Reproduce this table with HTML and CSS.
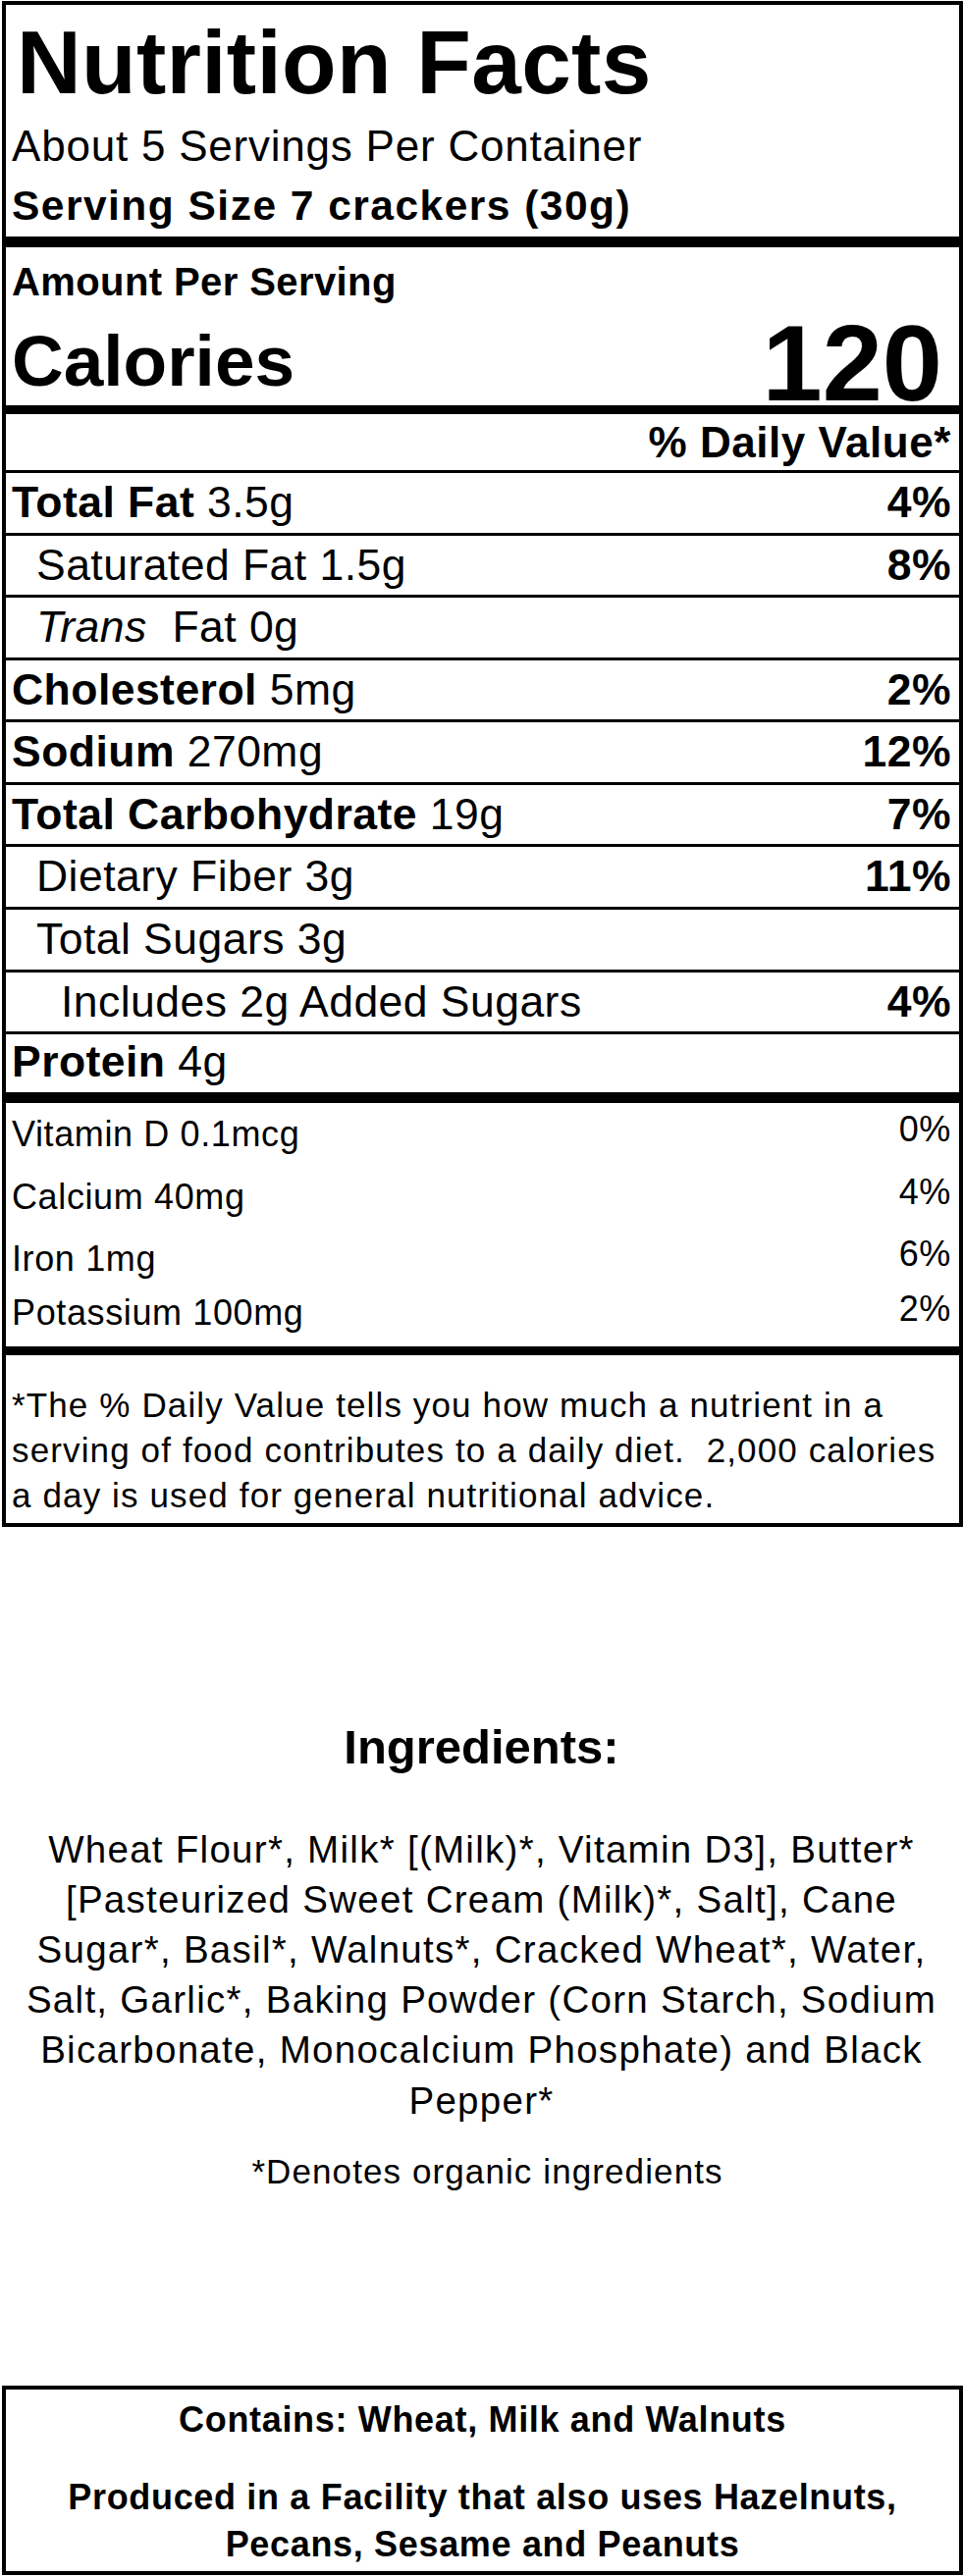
FILE: index.html
```html
<!DOCTYPE html>
<html lang="en">
<head>
<meta charset="utf-8">
<title>Nutrition Facts</title>
<link rel="stylesheet" href="styles.css">
</head>
<body>
<div class="label">
  <section class="head">
    <h1 class="title">Nutrition Facts</h1>
    <p class="servings">About 5 Servings Per Container</p>
    <p class="size">Serving Size 7 crackers (30g)</p>
  </section>
  <section class="cal">
    <p class="amount">Amount Per Serving</p>
    <div class="cal-row">
      <span class="cal-label">Calories</span>
      <span class="cal-value">120</span>
    </div>
  </section>
  <section class="nutrients">
    <div class="dv-head">% Daily Value*</div>
    <div class="row"><span><b>Total Fat</b> 3.5g</span><b>4%</b></div>
    <div class="row sub"><span>Saturated Fat 1.5g</span><b>8%</b></div>
    <div class="row sub"><span><em>Trans</em>&nbsp; Fat 0g</span></div>
    <div class="row"><span><b>Cholesterol</b> 5mg</span><b>2%</b></div>
    <div class="row"><span><b>Sodium</b> 270mg</span><b>12%</b></div>
    <div class="row"><span><b>Total Carbohydrate</b> 19g</span><b>7%</b></div>
    <div class="row sub"><span>Dietary Fiber 3g</span><b>11%</b></div>
    <div class="row sub"><span>Total Sugars 3g</span></div>
    <div class="row sub2"><span>Includes 2g Added Sugars</span><b>4%</b></div>
    <div class="row last"><span><b>Protein</b> 4g</span></div>
  </section>
  <section class="vitamins">
    <div class="vit"><span>Vitamin D 0.1mcg</span><span class="vit-pct">0%</span></div>
    <div class="vit"><span>Calcium 40mg</span><span class="vit-pct">4%</span></div>
    <div class="vit"><span>Iron 1mg</span><span class="vit-pct">6%</span></div>
    <div class="vit short"><span>Potassium 100mg</span><span class="vit-pct">2%</span></div>
  </section>
  <p class="footnote">*The % Daily Value tells you how much a nutrient in a serving of food contributes to a daily diet.&nbsp; 2,000 calories a day is used for general nutritional advice.</p>
</div>

<section class="ingredients">
  <h2 class="ing-title">Ingredients:</h2>
  <p class="ing-text">Wheat Flour*, Milk* [(Milk)*, Vitamin D3], Butter* [Pasteurized Sweet Cream (Milk)*, Salt], Cane Sugar*, Basil*, Walnuts*, Cracked Wheat*, Water, Salt, Garlic*, Baking Powder (Corn Starch, Sodium Bicarbonate, Monocalcium Phosphate) and Black Pepper*</p>
  <p class="ing-note">*Denotes organic ingredients</p>
</section>

<div class="allergens">
  <p>Contains: Wheat, Milk and Walnuts</p>
  <p>Produced in a Facility that also uses Hazelnuts, Pecans, Sesame and Peanuts</p>
</div>
</body>
</html>
```
FILE: styles.css
```css
body {
  margin: 0;
  background: #fff;
  color: #000;
  font-family: "Liberation Sans", Arial, sans-serif;
}

p, h1, h2 {
  margin: 0;
}

/* ---------- Nutrition label ---------- */
.label {
  box-sizing: border-box;
  width: 979px;
  margin: 1px 0 0 2px;
  border: 4px solid #000;
}

.head {
  padding: 9px 8px 5px 6px;
}

.title {
  padding-left: 5px;
  font-size: 91px;
  line-height: 100px;
  font-weight: 700;
  letter-spacing: 0.3px;
}

.servings {
  font-size: 44px;
  line-height: 70px;
  letter-spacing: 0.78px;
}

.size {
  font-size: 42.5px;
  line-height: 52px;
  font-weight: 700;
  letter-spacing: 1.48px;
}

.cal {
  border-top: 11px solid #000;
  padding: 0 8px 0 6px;
}

.amount {
  font-size: 40px;
  line-height: 71px;
  font-weight: 700;
  letter-spacing: 0.4px;
}

.cal-row {
  display: flex;
  justify-content: space-between;
  align-items: flex-end;
}

.cal-label {
  font-size: 73px;
  line-height: 90px;
  font-weight: 700;
}

.cal-value {
  padding-right: 9px;
  font-size: 110px;
  line-height: 86px;
  font-weight: 700;
}

.nutrients {
  border-top: 9px solid #000;
}

.dv-head {
  padding: 0 8px 0 6px;
  text-align: right;
  font-size: 44px;
  line-height: 57px;
  font-weight: 700;
  letter-spacing: 0.55px;
}

.row {
  display: flex;
  justify-content: space-between;
  border-top: 3px solid #000;
  padding: 0 8px 0 6px;
  font-size: 44.5px;
  line-height: 60.56px;
  letter-spacing: 0.46px;
}

.row b {
  font-weight: 700;
}

.row em {
  font-style: italic;
}

.row.sub {
  padding-left: 31px;
}

.row.sub2 {
  padding-left: 56px;
}

.row.last {
  line-height: 55px;
  padding-bottom: 4px;
}

.vitamins {
  border-top: 11px solid #000;
  padding: 0 8px 11.5px 6px;
}

.vit {
  display: flex;
  justify-content: space-between;
  align-items: flex-start;
  font-size: 36px;
  line-height: 63.5px;
  letter-spacing: 0.62px;
}

.vit .vit-pct {
  line-height: 54.5px;
}

.vit.short {
  line-height: 46px;
}

.vit.short .vit-pct {
  line-height: 37px;
}

.footnote {
  border-top: 9px solid #000;
  padding: 27.5px 8px 5.5px 6px;
  font-size: 35px;
  line-height: 46px;
  letter-spacing: 1.13px;
}

/* ---------- Ingredients ---------- */
.ingredients {
  padding: 194px 10px 0;
  text-align: center;
}

.ing-title {
  font-size: 49px;
  line-height: 60px;
  font-weight: 700;
}

.ing-text {
  margin-top: 48.6px;
  font-size: 38.5px;
  line-height: 51.2px;
  letter-spacing: 1.28px;
}

.ing-note {
  margin-top: 24.4px;
  padding-left: 12px;
  font-size: 35px;
  line-height: 46px;
  letter-spacing: 1.1px;
}

/* ---------- Allergen box ---------- */
.allergens {
  box-sizing: border-box;
  width: 979px;
  margin: 194.8px 0 0 2px;
  border: 4px solid #000;
  padding: 7px 6px 3px;
  text-align: center;
  font-size: 36px;
  line-height: 48px;
  font-weight: 700;
  letter-spacing: 0.67px;
}

.allergens p + p {
  margin-top: 31px;
}
```
